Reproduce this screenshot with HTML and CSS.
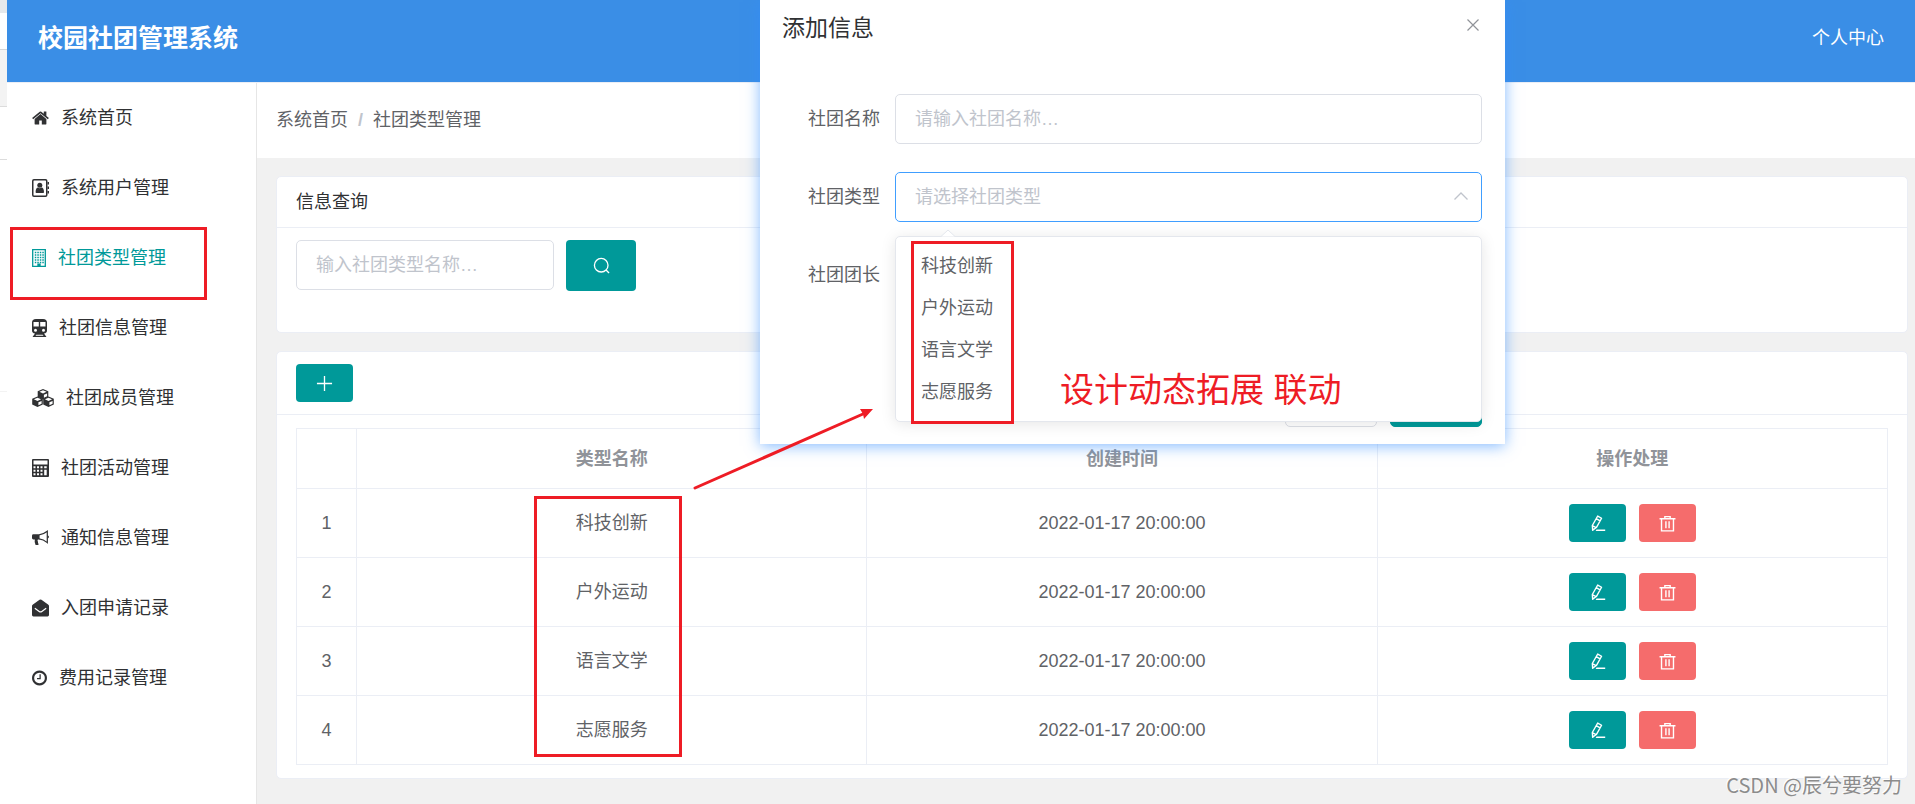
FILE: index.html
```html
<!DOCTYPE html>
<html lang="zh-CN">
<head>
<meta charset="utf-8">
<title>校园社团管理系统</title>
<link rel="stylesheet" href="styles.css">
</head>
<body>
<svg class="sprite" aria-hidden="true">
  <symbol id="edit" viewBox="0 0 1024 1024"><path fill="none" stroke="currentColor" stroke-width="84" stroke-linejoin="round" d="M524 62l234 134-316 560-222 156-20-278zM430 216l240 138M222 650l204 110"/><path fill="currentColor" d="M456 880h520v84H400zM190 800l120 70-112 100z"/></symbol>
  <symbol id="trash" viewBox="0 0 1024 1024"><path fill="none" stroke="currentColor" stroke-width="84" d="M32 226h960M352 210V98h320v112M152 240v716h720V240M416 380v420M608 380v420"/></symbol>
</svg>
<div class="backdrop-edge"></div>
<div class="app">
  <header class="topbar">
    <h1 class="brand">校园社团管理系统</h1>
    <a class="profile" href="#">个人中心</a>
  </header>
  <div class="columns">
    <nav class="sidebar">
      <a class="item" href="#"><svg class="ico w17" viewBox="64 128 1664 1536"><path fill="currentColor" d="M1472 992v480q0 26-19 45t-45 19h-384v-384h-256v384h-384q-26 0-45-19t-19-45v-480q0-1 .5-3t.5-3l575-474 575 474q1 2 1 6zm223-69l-62 74q-8 9-21 11h-3q-13 0-21-7l-692-577-692 577q-12 8-24 7-13-2-21-11l-62-74q-8-10-7-23.5t11-21.5l719-599q32-26 76-26t76 26l244 204v-195q0-14 9-23t23-9h192q14 0 23 9t9 23v408l219 182q10 8 11 21.5t-7 23.5z"/></svg>系统首页</a>
      <a class="item" href="#"><svg class="ico w17" viewBox="0 0 17 18"><rect x=".75" y=".75" width="14" height="16.5" rx="1.2" fill="none" stroke="currentColor" stroke-width="1.5"/><circle cx="7.8" cy="6.3" r="2.5" fill="currentColor"/><path fill="currentColor" d="M3.6 13.2c0-3 1-4.700 2.500-4.700 1 1 2.400 1 3.400 0 1.500 0 2.500 1.700 2.500 4.700q0 .8-.8.8H4.400q-.8 0-.8-.8zM15.500 3h1.500v2.500h-1.500zM15.500 7.500h1.500V10h-1.500zM15.500 12h1.500v2.500h-1.500z"/></svg>系统用户管理</a>
      <a class="item active" href="#"><svg class="ico w14" viewBox="0 0 14 18"><path fill="none" stroke="currentColor" stroke-width="1.300" d="M.7.7h12.600v16.600H.7z"/><path fill="none" stroke="currentColor" stroke-width="1.500" stroke-dasharray="1.500 1" d="M2.800 3.500h9M2.800 6h9M2.800 8.500h9M2.800 11h9M2.800 13.500h9"/><path fill="currentColor" d="M5.300 14.500h3.400v3H5.300z"/></svg>社团类型管理</a>
      <a class="item" href="#"><svg class="ico w15" viewBox="0 0 15 18"><path fill="currentColor" fill-rule="evenodd" d="M4 0h7q4 0 4 3.500v8q0 2.500-3 3l2.500 3.500H.5L3 14.500q-3-.5-3-3v-8Q0 0 4 0zM1.500 3v4.500h5.300V3zM8.200 3v4.500h5.300V3zM3.500 9.800a1.500 1.500 0 100 3 1.500 1.500 0 000-3zM11.500 9.800a1.500 1.500 0 100 3 1.500 1.500 0 000-3zM3.500 16.700h8l-.8-1H4.300z"/></svg>社团信息管理</a>
      <a class="item" href="#"><svg class="ico w22" viewBox="0 0 22 18"><g id="cube"><path fill="currentColor" d="M11 0l5.300 2.300V8L11 10.500 5.700 8V2.300z"/><path fill="#fff" d="M11 1.300l3.600 1.500L11 4.400 7.400 2.800zM11.900 5.800l3.200-1.400v2.900l-3.200 1.500z"/></g><use href="#cube" x="-5.500" y="7.500"/><use href="#cube" x="5.500" y="7.500"/></svg>社团成员管理</a>
      <a class="item" href="#"><svg class="ico w17" viewBox="0 0 17 18"><path fill="currentColor" fill-rule="evenodd" d="M1 0h15q1 0 1 1v16q0 1-1 1H1q-1 0-1-1V1q0-1 1-1zM1.500 1.500v4h14v-4z"/><path fill="none" stroke="#fff" stroke-width="2" stroke-dasharray="2 1.500" d="M1.500 8.200h10.500M1.500 11.700h10.500M1.500 15.200h10.500"/><path fill="#fff" d="M12.200 7.200h2.500v2h-2.500zM12.200 10.700h2.500v5.500h-2.500z"/></svg>社团活动管理</a>
      <a class="item" href="#"><svg class="ico w17" viewBox="0 0 18 16"><path fill="currentColor" d="M1.500 4H8v5.500H6.200q-.8 1.500.2 2.700-.5 1.200.8 2.300-1 1.400-3.400.9Q2.300 12 3 9.500H1.500Q0 9.500 0 8V5.500Q0 4 1.500 4z"/><path fill="none" stroke="currentColor" stroke-width="1.300" d="M7.500 4.600Q12 4.300 16.200.9v12Q12 9.400 7.500 9"/><path fill="currentColor" d="M16.500 5q1.500.5 1.500 1.800T16.500 8.700z"/></svg>通知信息管理</a>
      <a class="item" href="#"><svg class="ico w17" viewBox="0 0 18 18"><path fill="currentColor" d="M0 6.500Q0 6 1 5.200L8 .3q1-.6 2 0l7 4.900q1 .7 1 1.300v10q0 1.500-1.500 1.500h-15Q0 18 0 16.500z"/><path fill="none" stroke="#fff" stroke-width="1.300" d="M3 9.300l4.600 3.400q1.400 1 2.800 0L15 9.300"/></svg>入团申请记录</a>
      <a class="item" href="#"><svg class="ico w15" viewBox="128 128 1536 1536"><path fill="currentColor" d="M1024 544v448q0 14-9 23t-23 9h-320q-14 0-23-9t-9-23v-64q0-14 9-23t23-9h224v-352q0-14 9-23t23-9h64q14 0 23 9t9 23zm416 352q0-148-73-273t-198-198-273-73-273 73-198 198-73 273 73 273 198 198 273 73 273-73 198-198 73-273zm224 0q0 209-103 385.500t-279.500 279.500-385.500 103-385.500-103-279.500-279.500-103-385.500 103-385.500 279.500-279.500 385.500-103 385.500 103 279.500 279.500 103 385.500z"/></svg>费用记录管理</a>
    </nav>
    <main class="main">
      <nav class="crumbs"><a href="#">系统首页</a><span class="slash">/</span><span>社团类型管理</span></nav>
      <section class="card">
        <h2 class="card-title">信息查询</h2>
        <form class="search">
          <input class="field" type="text" aria-label="社团类型名称" placeholder="输入社团类型名称…">
          <button class="btn find" type="button" aria-label="搜索"><svg class="glyph" viewBox="0 0 18 18"><g fill="none" stroke="currentColor" stroke-width="1.400"><circle cx="8.700" cy="8.700" r="7.200"/><path d="M13.800 13.800l3.200 3.200"/></g></svg></button>
        </form>
      </section>
      <section class="card">
        <div class="tools"><button class="btn small" type="button" aria-label="新增"><svg class="glyph" viewBox="0 0 18 18"><path fill="none" stroke="currentColor" stroke-width="1.400" d="M9 1v16M1 9h16"/></svg></button></div>
        <div class="table-wrap">
        <table class="table">
          <colgroup><col class="num"><col><col><col></colgroup>
          <thead><tr><th></th><th>类型名称</th><th>创建时间</th><th>操作处理</th></tr></thead>
          <tbody>
            <tr><td>1</td><td>科技创新</td><td>2022-01-17 20:00:00</td><td><div class="ops"><button class="btn small" aria-label="编辑"><svg class="glyph"><use href="#edit"/></svg></button><button class="btn small danger" aria-label="删除"><svg class="glyph"><use href="#trash"/></svg></button></div></td></tr>
            <tr><td>2</td><td>户外运动</td><td>2022-01-17 20:00:00</td><td><div class="ops"><button class="btn small" aria-label="编辑"><svg class="glyph"><use href="#edit"/></svg></button><button class="btn small danger" aria-label="删除"><svg class="glyph"><use href="#trash"/></svg></button></div></td></tr>
            <tr><td>3</td><td>语言文学</td><td>2022-01-17 20:00:00</td><td><div class="ops"><button class="btn small" aria-label="编辑"><svg class="glyph"><use href="#edit"/></svg></button><button class="btn small danger" aria-label="删除"><svg class="glyph"><use href="#trash"/></svg></button></div></td></tr>
            <tr><td>4</td><td>志愿服务</td><td>2022-01-17 20:00:00</td><td><div class="ops"><button class="btn small" aria-label="编辑"><svg class="glyph"><use href="#edit"/></svg></button><button class="btn small danger" aria-label="删除"><svg class="glyph"><use href="#trash"/></svg></button></div></td></tr>
          </tbody>
        </table>
        </div>
      </section>
    </main>
  </div>
</div>

<div class="dialog" role="dialog" aria-labelledby="dialog-title">
  <div class="dialog-head">
    <h2 class="dialog-title" id="dialog-title">添加信息</h2>
    <button class="close" type="button" aria-label="关闭"><svg class="close-ico" viewBox="0 0 12 12"><path fill="none" stroke="currentColor" stroke-width="1.200" d="M.5.5l11 11M11.500.5l-11 11"/></svg></button>
  </div>
  <form class="form">
    <div class="row"><label class="label" for="club-name">社团名称</label><input class="field" id="club-name" type="text" placeholder="请输入社团名称…"></div>
    <div class="row"><label class="label" for="club-type">社团类型</label>
      <div class="select-box">
        <select class="field focus" id="club-type"><option>请选择社团类型</option></select>
        <svg class="chevron" viewBox="0 0 14 8"><path fill="none" stroke="currentColor" stroke-width="1.300" d="M.5 7.500L7 1l6.500 6.500"/></svg>
        <div class="menu">
          <svg class="tip" viewBox="0 0 14 8"><path fill="#fff" stroke="#e4e7ed" d="M0 7.500L7 1l7 6.500"/></svg>
          <ul class="options" role="listbox" aria-label="社团类型"><li role="option">科技创新</li><li role="option">户外运动</li><li role="option">语言文学</li><li role="option">志愿服务</li></ul>
        </div>
      </div>
    </div>
    <div class="row"><span class="label">社团团长</span></div>
    <div class="dialog-foot"><button class="foot-btn" type="button" aria-label="取消"></button><button class="foot-btn ok" type="button" aria-label="确定"></button></div>
  </form>
</div>

<div class="mark mark-nav"></div>
<div class="mark mark-rows"></div>
<div class="mark mark-options"></div>
<svg class="arrow" viewBox="0 0 184 86"><path fill="none" stroke="#ee1c25" stroke-width="3" stroke-linecap="round" d="M3 82L171 8"/><path fill="#ee1c25" d="M181 3h-13l3 5 1 5z"/></svg>
<p class="note">设计动态拓展 联动</p>
<p class="watermark">CSDN @辰兮要努力</p>
</body>
</html>
```
FILE: styles.css
```css
* { box-sizing: border-box; }

body {
  margin: 0;
  min-height: 100vh;
  display: flex;
  position: relative;
  overflow: hidden;
  background: #fff;
  color: #606266;
  font: 18px/24px "Liberation Sans", "Noto Sans CJK SC", sans-serif;
}

a { color: inherit; text-decoration: none; }
h1, h2, p, ul { margin: 0; padding: 0; }
button, input, select { font: inherit; margin: 0; padding: 0; }
.sprite { position: absolute; width: 0; height: 0; }

.backdrop-edge {
  width: 7px;
  background: linear-gradient(#e6e9ec 13px, #fff 13px 49px, #d5d7da 49px 50px, #f3f3f3 50px 106px, #dcdcdc 106px 107px, #fff 107px 159px, #dcdcdc 159px 160px, #fff 160px 391px, #f3f3f3 391px 392px, #fff 392px);
}

.app { flex: 1; display: flex; flex-direction: column; min-width: 0; }

.topbar {
  height: 83px;
  padding: 0 31px 6px;
  display: flex;
  align-items: center;
  justify-content: space-between;
  background: #3a8ee6;
  border-bottom: 1px solid #ebeef5;
  color: #fff;
}
.brand { font-size: 25px; line-height: 36px; font-weight: 700; }

.columns { flex: 1; display: flex; }
.sidebar { width: 250px; border-right: 1px solid #e6e6e6; background: #fff; color: #303133; }
.item { height: 70px; padding-left: 25px; display: flex; align-items: center; gap: 12px; }
.item.active { color: #009999; }
.ico { height: 18px; flex: none; }
.w14 { width: 14px; }
.w15 { width: 15px; }
.w17 { width: 17px; }
.w22 { width: 22px; }

.main { flex: 1; min-width: 0; background: #f1f1f1; }
.crumbs { height: 75px; padding: 0 19px 2px; background: #fff; display: flex; align-items: center; gap: 10px; }
.slash { color: #c0c4cc; font-weight: 700; }

.card { margin: 18px 7px 0 19px; border: 1px solid #ebeef5; border-radius: 5px; background: #fff; }
.card-title { height: 51px; padding: 13px 19px; border-bottom: 1px solid #ebeef5; color: #303133; font-size: 18px; line-height: 24px; font-weight: 400; }
.search { display: flex; gap: 12px; padding: 12px 19px 41px; }
.search .field { width: 258px; }

.field {
  height: 50px;
  width: 100%;
  padding: 0 19px;
  border: 1px solid #dcdfe6;
  border-radius: 5px;
  background: #fff;
  color: #606266;
  outline: none;
}
.field::placeholder { color: #c0c4cc; opacity: 1; }

.btn { border: 0; border-radius: 4px; background: #009999; color: #fff; display: flex; align-items: center; justify-content: center; }
.find { width: 70px; height: 51px; }
.small { width: 57px; height: 38px; }
.danger { background: #f56c6c; }
.glyph { width: 17px; height: 17px; }

.tools { padding: 12px 19px; border-bottom: 1px solid #ebeef5; }
.table-wrap { padding: 13px 19px; }
.table { width: 100%; table-layout: fixed; border-collapse: collapse; text-align: center; }
.num { width: 60px; }
.table th, .table td { border: 1px solid #ebeef5; padding: 0; height: 69px; }
.table th { height: 60px; color: #909399; font-weight: 700; }
.ops { display: flex; justify-content: center; gap: 13px; }

.dialog {
  position: absolute;
  left: 760px;
  top: 0;
  width: 745px;
  padding-bottom: 17px;
  background: #fff;
  box-shadow: 0 2px 14px rgba(50, 140, 255, .6);
}
.dialog-head { display: flex; justify-content: space-between; align-items: flex-start; padding: 10px 26px 10px 22px; }
.dialog-title { color: #303133; font-size: 23px; line-height: 36px; font-weight: 400; }
.close { border: 0; background: none; color: #909399; height: 30px; }
.close-ico { display: block; width: 12px; height: 12px; }
.form { padding: 38px 23px 0 48px; }
.row { display: flex; align-items: center; height: 50px; margin-bottom: 28px; }
.label { width: 87px; flex: none; }
.select-box { position: relative; flex: 1; }
.select-box select { appearance: none; display: block; color: #c0c4cc; }
.select-box .focus { border-color: #409eff; }
.chevron { position: absolute; right: 14px; top: 20px; width: 14px; height: 8px; color: #c0c4cc; }
.menu {
  position: absolute;
  left: 0;
  right: 0;
  top: 64px;
  padding: 8px 0;
  border: 1px solid #e4e7ed;
  border-radius: 5px;
  background: #fff;
  box-shadow: 0 2px 15px rgba(0, 0, 0, .1);
}
.tip { position: absolute; left: 45px; top: -8px; width: 14px; height: 8px; }
.options { list-style: none; line-height: 42px; padding-left: 25px; }
.dialog-foot { display: flex; justify-content: flex-end; gap: 13px; padding-top: 49px; }
.foot-btn { width: 92px; height: 50px; border: 1px solid #dcdfe6; border-radius: 5px; background: #fff; }
.foot-btn.ok { border-color: #009999; background: #009999; }

.mark { position: absolute; border: 3px solid #ee1c25; }
.mark-nav { left: 10px; top: 227px; width: 197px; height: 73px; }
.mark-rows { left: 534px; top: 496px; width: 148px; height: 261px; }
.mark-options { left: 911px; top: 241px; width: 103px; height: 183px; }
.arrow { position: absolute; left: 692px; top: 406px; width: 184px; height: 86px; }
.note { position: absolute; left: 1060px; top: 366px; color: #ee1c25; font-size: 34px; line-height: 48px; white-space: nowrap; }
.watermark { position: absolute; right: 13px; bottom: 4px; color: #8c8c8c; font-family: "Noto Sans CJK SC", sans-serif; font-size: 20px; line-height: 30px; text-shadow: -1px -1px 0 #fff; }
```
